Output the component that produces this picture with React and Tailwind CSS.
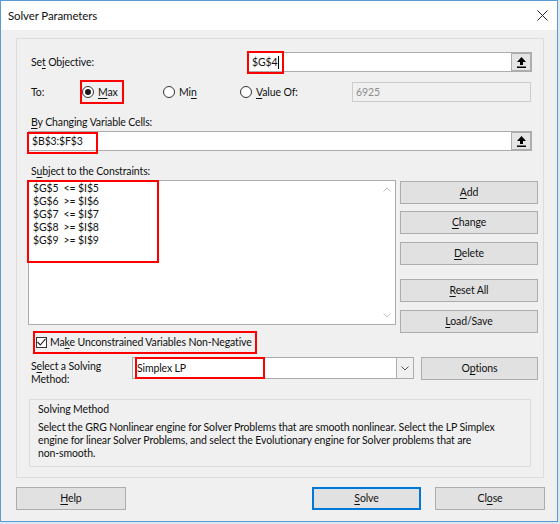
import React from "react";

const U = ({ children }) => (
  <span className="underline decoration-1 underline-offset-[2px]">{children}</span>
);

const Btn = ({ className = "", focused, children }) => (
  <div
    className={
      focused
        ? `flex items-center justify-center h-[23px] bg-[#e1e1e1] border-2 border-[#0078d7] ${className}`
        : `flex items-center justify-center h-[23px] bg-[#e1e1e1] border border-[#adadad] ${className}`
    }
  >
    {children}
  </div>
);

const Pick = () => (
  <div className="ml-auto flex h-full w-[20px] items-center justify-center border border-[#adadad] bg-[#e5e5e5]">
    <svg width="9" height="11" viewBox="0 0 9 11">
      <path d="M4.5 0 L9 5 H6 V8 H3 V5 H0 Z" fill="#000" />
      <rect x="0" y="9.5" width="9" height="1.5" fill="#000" />
    </svg>
  </div>
);

const Radio = ({ on }) => (
  <div className="flex h-[12px] w-[12px] items-center justify-center rounded-full border border-[#333] bg-white">
    {on && <div className="h-[6px] w-[6px] rounded-full bg-[#1a1a1a]" />}
  </div>
);

export default function App() {
  return (
    <div className="h-[524px] w-[560px] bg-[#dfe7ef] font-['Lato',sans-serif] text-[10.5px] leading-[13px] tracking-[-0.12px] text-[#111]">
      <div className="flex h-[522px] w-[558px] flex-col border border-[#5b9bd5] bg-[#f0f0f0]">
        {/* title bar */}
        <div className="flex h-[29px] items-center bg-white pl-[7px] text-[11.5px]">
          <span>Solver Parameters</span>
          <svg className="ml-auto mr-[9px]" width="11" height="11" viewBox="0 0 11 11">
            <path d="M0.5 0.5 L10.5 10.5 M10.5 0.5 L0.5 10.5" stroke="#222" strokeWidth="1" />
          </svg>
        </div>

        {/* main group */}
        <div className="ml-[15px] mt-[8px] flex h-[440px] w-[528px] flex-col border border-[#dcdcdc]">
          {/* objective */}
          <div className="mt-[13px] flex h-[20px] items-center pl-[14px]">
            <span className="w-[216px]">
              Se<U>t</U> Objective:
            </span>
            <div className="relative flex h-[20px] w-[285px] items-center border border-[#acacac] bg-white">
              <span className="pl-[4px]">$G$4</span>
              <span className="ml-[1px] h-[13px] w-px bg-black" />
              <Pick />
              <div className="pointer-events-none absolute -top-[2px] -left-px h-[23px] w-[37px] border-2 border-[#ff0000]" />
            </div>
          </div>

          {/* to */}
          <div className="mt-[10px] flex h-[20px] items-center pl-[14px]">
            <span className="w-[51px]">To:</span>
            <div className="relative flex w-[81px] items-center gap-[4px]">
              <Radio on />
              <span>
                <U>M</U>ax
              </span>
              <div className="pointer-events-none absolute -top-[6px] -left-[2px] h-[24px] w-[44px] border-2 border-[#ff0000]" />
            </div>
            <div className="flex w-[77px] items-center gap-[4px]">
              <Radio />
              <span>
                Mi<U>n</U>
              </span>
            </div>
            <div className="flex w-[112px] items-center gap-[4px]">
              <Radio />
              <span>
                <U>V</U>alue Of:
              </span>
            </div>
            <div className="flex h-[20px] w-[179px] items-center border border-[#cccccc] bg-[#f0f0f0] pl-[3px] text-[#8d8d8d]">
              6925
            </div>
          </div>

          {/* changing cells */}
          <div className="mt-[13px] flex h-[14px] items-center pl-[14px]">
            <span>
              <U>B</U>y Changing Variable Cells:
            </span>
          </div>
          <div className="relative ml-[11px] mt-[2px] flex h-[20px] w-[504px] items-center border border-[#acacac] bg-white">
            <span className="pl-[3px]">$B$3:$F$3</span>
            <Pick />
            <div className="pointer-events-none absolute top-0 -left-[2px] h-[22px] w-[71px] border-2 border-[#ff0000]" />
          </div>

          {/* constraints */}
          <div className="mt-[13px] flex h-[14px] items-center pl-[14px]">
            <span>
              S<U>u</U>bject to the Constraints:
            </span>
          </div>
          <div className="ml-[11px] mt-[2px] flex h-[145px] items-start">
            <div className="relative flex h-[145px] w-[368px] border border-[#acacac] bg-white">
              <div className="flex flex-col whitespace-pre pl-[4px] pt-[1px]">
                <span>$G$5  &lt;= $I$5</span>
                <span>$G$6  &gt;= $I$6</span>
                <span>$G$7  &lt;= $I$7</span>
                <span>$G$8  &gt;= $I$8</span>
                <span>$G$9  &gt;= $I$9</span>
              </div>
              <div className="ml-auto flex h-full w-[17px] flex-col items-center justify-between py-[6px]">
                <svg width="8" height="5" viewBox="0 0 8 5">
                  <path d="M0.5 4.5 L4 1 L7.5 4.5" stroke="#c2c2c2" fill="none" />
                </svg>
                <svg width="8" height="5" viewBox="0 0 8 5">
                  <path d="M0.5 0.5 L4 4 L7.5 0.5" stroke="#c2c2c2" fill="none" />
                </svg>
              </div>
              <div className="pointer-events-none absolute -top-px -left-[2px] h-[83px] w-[132px] border-2 border-[#ff0000]" />
            </div>
            <div className="ml-[4px] mt-px flex w-[138px] flex-col">
              <Btn>
                <span>
                  <U>A</U>dd
                </span>
              </Btn>
              <Btn className="mt-[7px]">
                <span>
                  <U>C</U>hange
                </span>
              </Btn>
              <Btn className="mt-[8px]">
                <span>
                  <U>D</U>elete
                </span>
              </Btn>
              <Btn className="mt-[14px]">
                <span>
                  <U>R</U>eset All
                </span>
              </Btn>
              <Btn className="mt-[8px]">
                <span>
                  <U>L</U>oad/Save
                </span>
              </Btn>
            </div>
          </div>

          {/* non-negative */}
          <div className="relative mt-[9px] flex h-[16px] items-center pl-[19px]">
            <div className="flex h-[11px] w-[11px] items-center justify-center border border-[#333] bg-white">
              <svg width="9" height="8" viewBox="0 0 9 8">
                <path d="M0.5 4 L3.3 7 L8.5 0.8" stroke="#222" fill="none" strokeWidth="1.1" />
              </svg>
            </div>
            <span className="ml-[3px]">
              Ma<U>k</U>e Unconstrained Variables Non-Negative
            </span>
            <div className="pointer-events-none absolute -top-[3px] left-[16px] h-[23px] w-[224px] border-2 border-[#ff0000]" />
          </div>

          {/* solving method */}
          <div className="mt-[7px] flex h-[23px] items-start pl-[14px]">
            <div className="w-[101px] pt-[3px]">
              S<U>e</U>lect a Solving
              <br />
              Method:
            </div>
            <div className="relative flex h-[22px] w-[282px] items-center border border-[#acacac] bg-white">
              <span className="pl-[4px]">Simplex LP</span>
              <div className="ml-auto flex h-full w-[17px] items-center justify-center border-l border-[#acacac] bg-[#f0f0f0]">
                <svg width="8" height="5" viewBox="0 0 8 5">
                  <path d="M0.5 0.5 L4 4 L7.5 0.5" stroke="#555" fill="none" />
                </svg>
              </div>
              <div className="pointer-events-none absolute -top-px left-[2px] h-[22px] w-[130px] border-2 border-[#ff0000]" />
            </div>
            <Btn className="ml-[7px] w-[117px]">
              <span>
                O<U>p</U>tions
              </span>
            </Btn>
          </div>

          <div className="ml-[12px] mt-[19px] flex h-[68px] w-[502px] flex-col border border-[#dcdcdc] pl-[8px] pt-[3px]">
            <span>Solving Method</span>
            <p className="mt-[5px] whitespace-nowrap">
              Select the GRG Nonlinear engine for Solver Problems that are smooth nonlinear. Select the LP Simplex
              <br />
              engine for linear Solver Problems, and select the Evolutionary engine for Solver problems that are
              <br />
              non-smooth.
            </p>
          </div>
        </div>

        {/* bottom buttons */}
        <div className="mt-[9px] flex pl-[15px]">
          <Btn className="w-[110px]">
            <span>
              <U>H</U>elp
            </span>
          </Btn>
          <Btn focused className="ml-[186px] w-[109px]">
            <span>
              <U>S</U>olve
            </span>
          </Btn>
          <Btn className="ml-[14px] w-[110px]">
            <span>
              Cl<U>o</U>se
            </span>
          </Btn>
        </div>
      </div>
    </div>
  );
}
